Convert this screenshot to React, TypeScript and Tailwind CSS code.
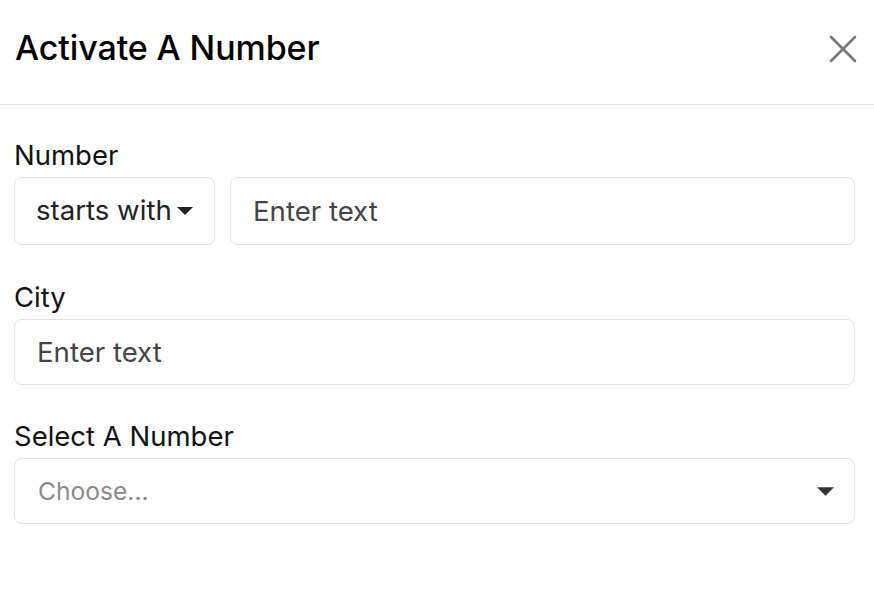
import React from "react";

const font = { fontFamily: "Inter, 'Noto Sans', sans-serif" };

const Caret = ({ className }: { className?: string }) => (
  <svg viewBox="0 0 18 9" className={className} fill="currentColor">
    <path d="M0 0h18L9 9z" />
  </svg>
);

const Field = ({ label, children }: { label: string; children: React.ReactNode }) => (
  <div className="flex flex-col">
    <label className="text-[27.5px] leading-[26px] text-[#111] mb-[9px]">{label}</label>
    {children}
  </div>
);

const TextBox = ({ className = "" }: { className?: string }) => (
  <input
    type="text"
    placeholder="Enter text"
    className={
      "rounded-[8px] border border-[#e1e1e6] bg-white px-[22px] text-[27.6px] text-[#333] placeholder:text-[#444] outline-none " +
      className
    }
  />
);

export default function App() {
  return (
    <div className="w-[874px] h-[590px] bg-white" style={font}>
      <div className="flex items-center justify-between h-[105px] pb-[9px] border-b border-[#e3e3e8] pl-[15px] pr-[17px]">
        <h1 className="text-[34px] font-medium text-black tracking-[-0.1px]">Activate A Number</h1>
        <button className="w-[28px] h-[28px] mt-[2px] text-[#777]" aria-label="Close">
          <svg viewBox="0 0 28 28" className="w-full h-full" stroke="currentColor" strokeWidth={2.6} strokeLinecap="round">
            <path d="M2 2l24 24M26 2L2 26" />
          </svg>
        </button>
      </div>

      <div className="flex flex-col pl-[14px] pr-[19px] pt-[37px]">
        <Field label="Number">
          <div className="flex gap-[15px]">
            <button className="flex items-center w-[201px] h-[68px] rounded-[8px] border border-[#e1e1e6] bg-white pl-[21px] text-[27.6px] text-[#222]">
              <span>starts with</span>
              <Caret className="w-[18px] h-[8px] ml-[4px] text-[#222]" />
            </button>
            <TextBox className="flex-1 min-w-0 h-[68px]" />
          </div>
        </Field>

        <div className="mt-[39px]">
          <Field label="City">
            <TextBox className="w-full h-[66px]" />
          </Field>
        </div>

        <div className="mt-[38px]">
          <Field label="Select A Number">
            <div className="flex items-center justify-between h-[66px] rounded-[8px] border border-[#e1e1e6] bg-white pl-[23px] pr-[20px]">
              <span className="text-[24.6px] text-[#8a8a8a]">Choose...</span>
              <Caret className="w-[17px] h-[9px] text-[#333]" />
            </div>
          </Field>
        </div>
      </div>
    </div>
  );
}
